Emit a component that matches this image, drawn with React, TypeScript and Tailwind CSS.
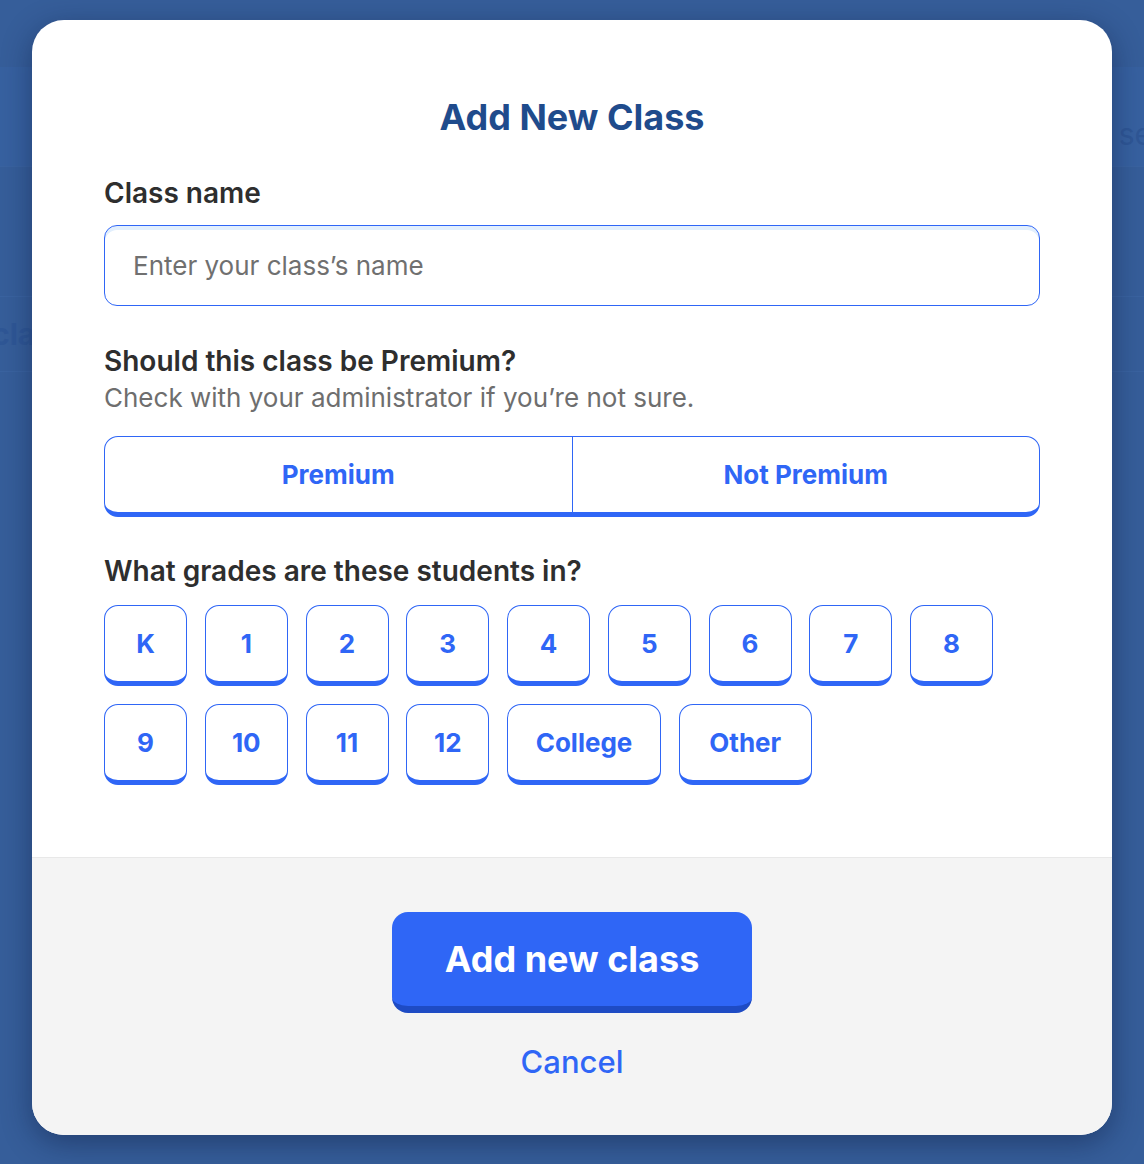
import React from 'react';

const grades = ['K', '1', '2', '3', '4', '5', '6', '7', '8', '9', '10', '11', '12', 'College', 'Other'];

const widthFor = (label: string) => {
  if (label === 'College') return 'w-[154px]';
  if (label === 'Other') return 'w-[133px]';
  return 'w-[83px]';
};

const GradeButton = ({ label }: { label: string }) => (
  <button
    type="button"
    className={
      'h-[81px] rounded-[14px] border border-b-[5px] border-[#2f66f6] bg-white text-[26px] font-bold text-[#2f66f6] ' +
      widthFor(label)
    }
  >
    {label}
  </button>
);

export default function App() {
  return (
    <div
      className="relative min-h-[1164px] w-full overflow-hidden bg-[#365e9a]"
      style={{ fontFamily: 'Inter, "Noto Sans", sans-serif' }}
    >
      {/* page behind the overlay */}
      <div className="pointer-events-none absolute inset-0">
        <div className="mt-[67px] h-[100px] border-b border-[#3a63a0] bg-[#3761a0]" />
        <div className="h-[130px] border-b border-[#3a63a0]" />
        <div className="flex h-[75px] items-center border-b border-[#3a63a0] text-[30px] font-bold text-[#2f5796]">
          <span className="-ml-[8px]">class</span>
        </div>
        <div className="absolute right-[-8px] top-[112px] text-[30px] text-[#2f5796]">se</div>
      </div>

      {/* modal */}
      <div className="relative flex justify-center pt-[20px]">
        <div className="flex w-[1080px] flex-col overflow-hidden rounded-[32px] bg-white shadow-[0_8px_30px_rgba(10,25,60,0.45)]">
          <div className="flex flex-col px-[72px] pb-[72px] pt-[76px]">
            <h1 className="text-center text-[36px] font-bold leading-[42px] text-[#1f4b8c]">Add New Class</h1>

            <label className="mt-[39px] text-[28px] font-semibold leading-[32px] text-[#2e2e2e]">Class name</label>
            <div className="mt-[16px] flex h-[81px] items-center rounded-[13px] border border-[#2f66f6] px-[28px] shadow-[inset_0_4px_0_#e2effd]">
              <span className="text-[26px] text-[#707070]">Enter your class’s name</span>
            </div>

            <div className="mt-[39px] text-[28px] font-semibold leading-[32px] text-[#2e2e2e]">Should this class be Premium?</div>
            <div className="mt-[5px] text-[26px] leading-[32px] text-[#6e6e6e]">Check with your administrator if you’re not sure.</div>

            <div className="mt-[22px] flex h-[81px] overflow-hidden rounded-[14px] border border-b-[5px] border-[#2f66f6]">
              <button type="button" className="flex-1 border-r border-[#2f66f6] text-[26px] font-bold text-[#2f66f6]">
                Premium
              </button>
              <button type="button" className="flex-1 text-[26px] font-bold text-[#2f66f6]">
                Not Premium
              </button>
            </div>

            <div className="mt-[38px] text-[28px] font-semibold leading-[32px] text-[#2e2e2e]">What grades are these students in?</div>
            <div className="mt-[18px] flex w-[910px] flex-wrap gap-x-[17.75px] gap-y-[18px]">
              {grades.map((g) => (
                <GradeButton key={g} label={g} />
              ))}
            </div>
          </div>

          <div className="flex flex-col items-center border-t border-[#e8e8e8] bg-[#f4f4f4] pb-[49px] pt-[54px]">
            <button
              type="button"
              className="h-[101px] w-[360px] rounded-[16px] border-b-[7px] border-[#1e4bc4] bg-[#2f66f6] text-[36px] font-bold text-white"
            >
              Add new class
            </button>
            <button type="button" className="mt-[26px] text-[31px] font-medium text-[#2f66f6]">
              Cancel
            </button>
          </div>
        </div>
      </div>
    </div>
  );
}
